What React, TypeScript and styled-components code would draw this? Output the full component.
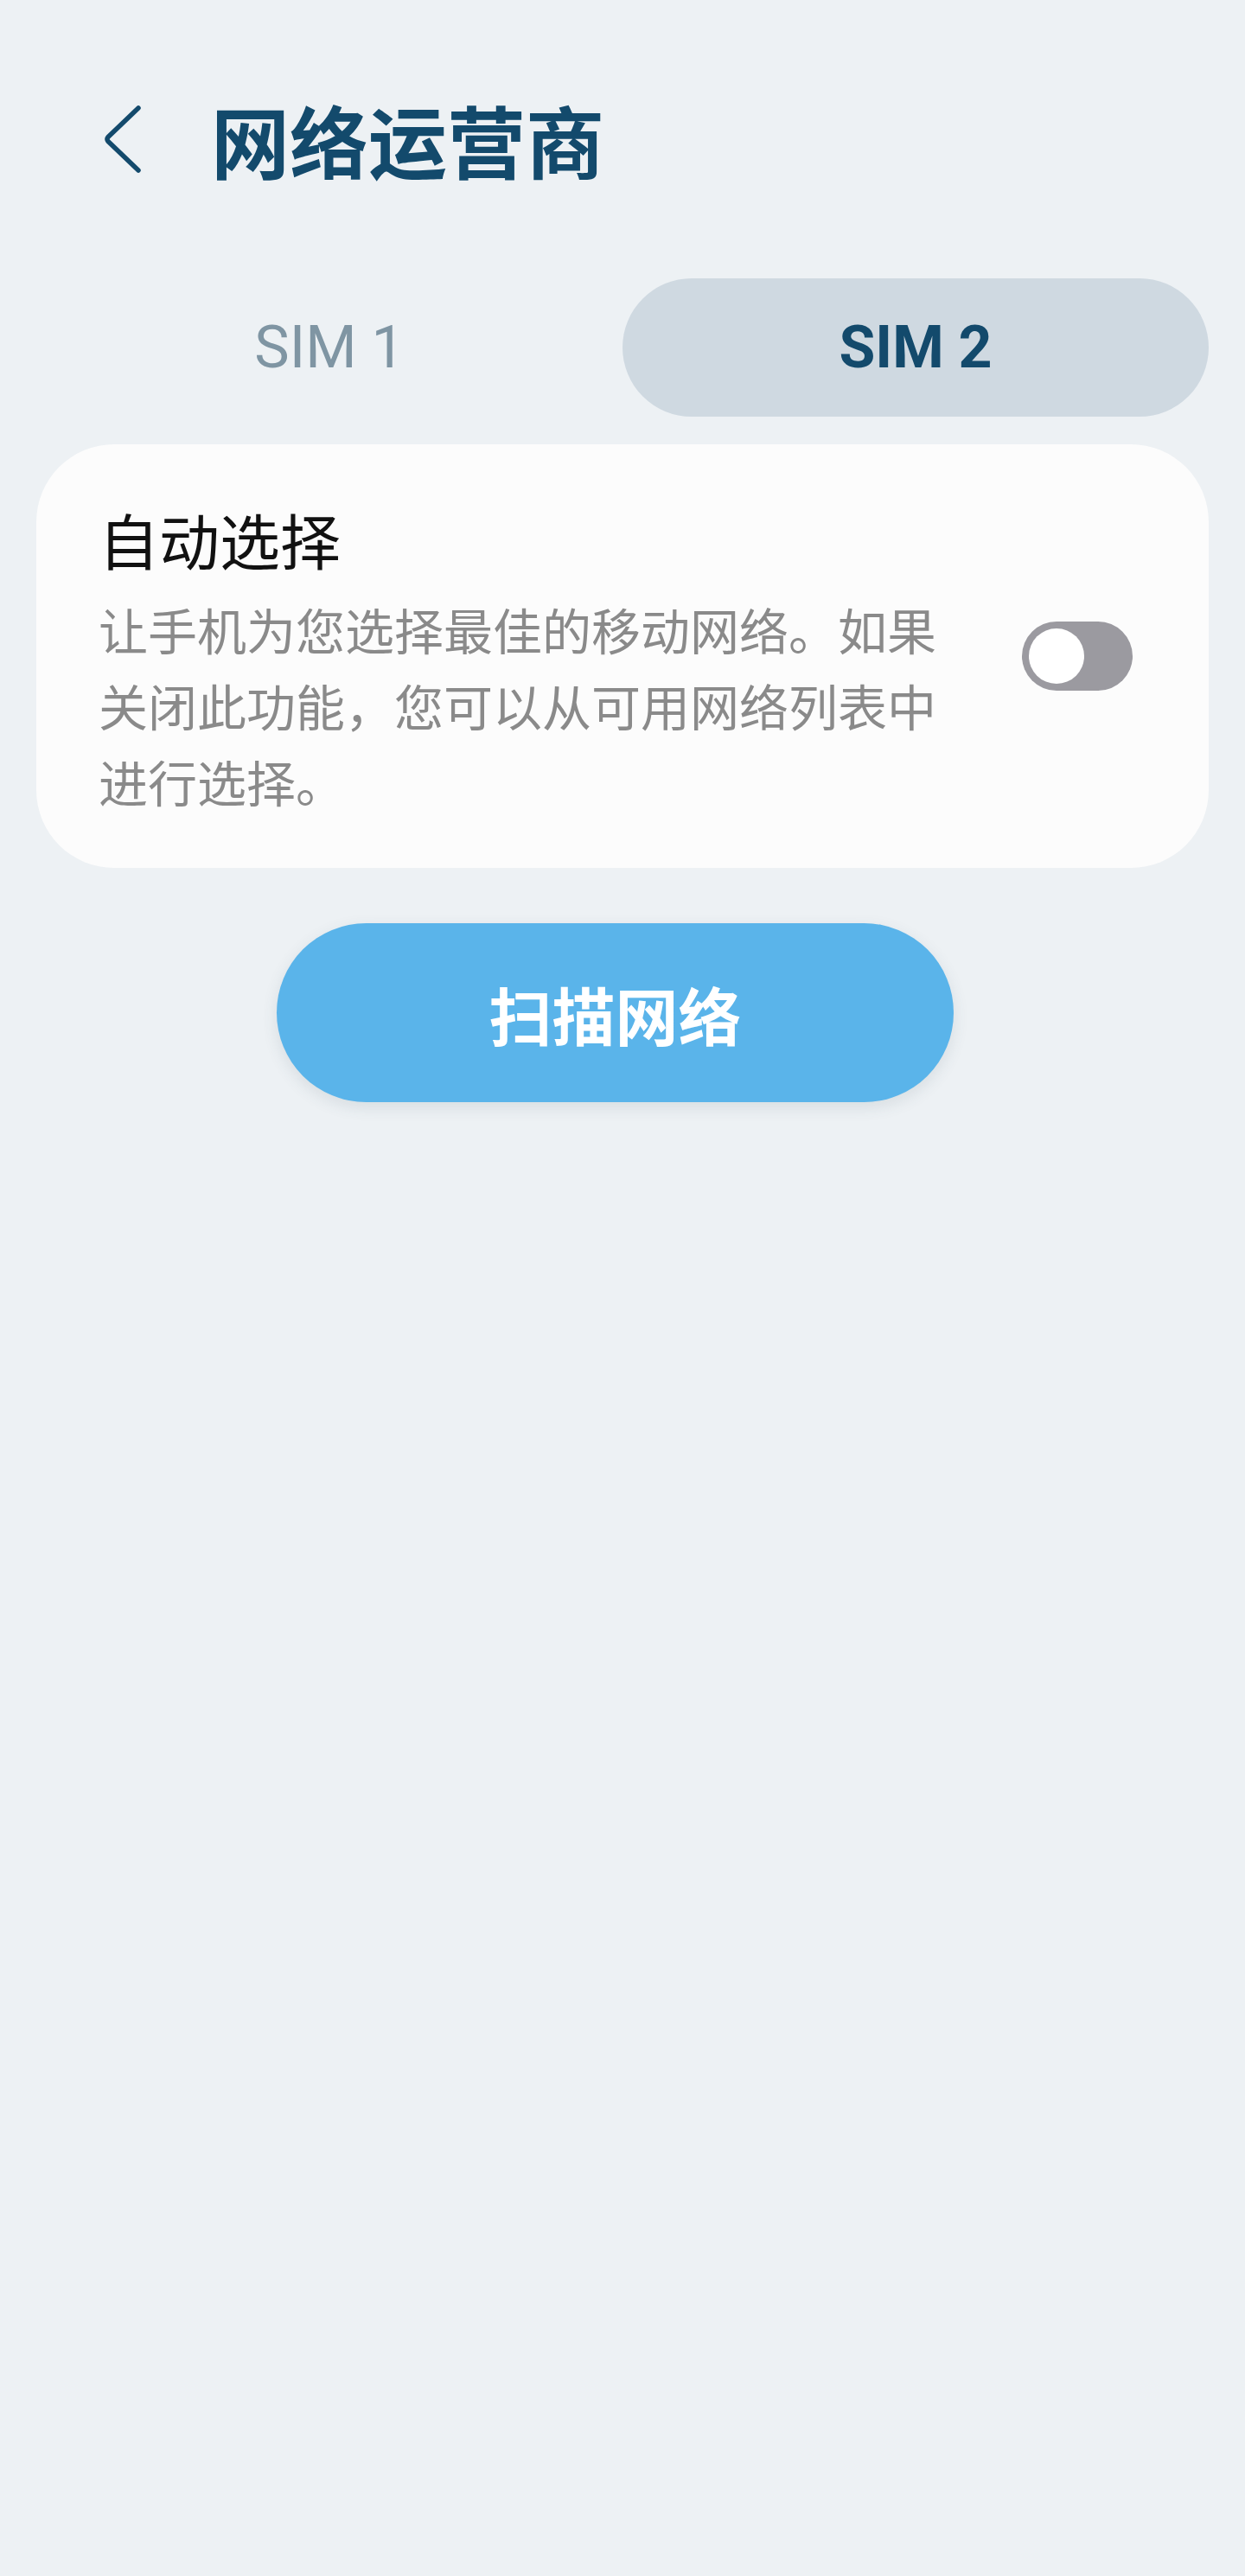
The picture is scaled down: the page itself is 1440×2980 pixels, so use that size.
import styled, { createGlobalStyle } from 'styled-components'

const GlobalStyle = createGlobalStyle`
  html, body {
    margin: 0;
    padding: 0;
    background: #edf1f4;
  }
  body {
    font-family: "Noto Sans CJK SC", Roboto, sans-serif;
  }
`

const Page = styled.div`
  width: 1440px;
  min-height: 2980px;
  box-sizing: border-box;
  padding: 0 42px;
  background: #edf1f4;
  display: flex;
  flex-direction: column;
`

const Header = styled.div`
  display: flex;
  align-items: center;
  height: 110px;
  margin-top: 110px;
  padding-left: 76px;
`

const BackButton = styled.button`
  border: none;
  background: none;
  padding: 0;
  width: 48px;
  height: 84px;
  display: flex;
  align-items: center;
  justify-content: center;
  margin-right: 78px;
  margin-top: -8px;
  cursor: pointer;
`

const Title = styled.h1`
  margin: 0 0 10px;
  font-size: 91px;
  font-weight: 700;
  line-height: 110px;
  color: #134a6c;
  letter-spacing: 0;
`

const Tabs = styled.div`
  display: grid;
  grid-template-columns: 1fr 1fr;
  height: 160px;
  margin-top: 102px;
`

const Tab = styled.div<{ $active?: boolean }>`
  display: flex;
  align-items: center;
  justify-content: center;
  border-radius: 80px;
  background: ${p => (p.$active ? '#cfd9e1' : 'transparent')};
  color: ${p => (p.$active ? '#134a6c' : '#7f95a3')};
  font-family: Roboto, "Noto Sans", sans-serif;
  font-size: 68px;
  font-weight: ${p => (p.$active ? 700 : 400)};
`

const Card = styled.div`
  margin-top: 32px;
  background: #fcfcfc;
  border-radius: 90px;
  padding: 64px 88px 57px 72px;
  display: flex;
  align-items: center;
  justify-content: space-between;
`

const TextBlock = styled.div`
  width: 1000px;
  display: flex;
  flex-direction: column;
`

const CardTitle = styled.div`
  font-size: 70px;
  line-height: 91px;
  color: #111111;
`

const CardDesc = styled.div`
  margin-top: 14px;
  font-size: 57px;
  line-height: 88px;
  color: #8a8a8a;
`

const Switch = styled.div<{ $on?: boolean }>`
  width: 128px;
  height: 80px;
  margin-bottom: 7px;
  border-radius: 40px;
  background: ${p => (p.$on ? '#3e91d0' : '#9b9aa0')};
  box-sizing: border-box;
  padding: 8px;
  display: flex;
  justify-content: ${p => (p.$on ? 'flex-end' : 'flex-start')};
  flex-shrink: 0;
`

const Knob = styled.div`
  width: 64px;
  height: 64px;
  border-radius: 50%;
  background: #ffffff;
`

const ScanButton = styled.button`
  margin-top: 64px;
  margin-left: 278px;
  width: 783px;
  height: 207px;
  border: none;
  border-radius: 104px;
  background: #5ab4ea;
  color: #ffffff;
  font-family: "Noto Sans CJK SC", sans-serif;
  font-size: 73px;
  font-weight: 700;
  box-shadow: 0 6px 18px rgba(60, 80, 100, 0.12);
  cursor: pointer;
`

const App = () => {
  return (
    <>
      <GlobalStyle />
      <Page>
        <Header>
          <BackButton aria-label="返回">
            <svg width="44" height="80" viewBox="0 0 44 80" fill="none">
              <path
                d="M40 4 L5 37.5 Q3 40 5 42.5 L40 76"
                stroke="#134a6c"
                strokeWidth="5.5"
                strokeLinecap="round"
                strokeLinejoin="round"
              />
            </svg>
          </BackButton>
          <Title>网络运营商</Title>
        </Header>
        <Tabs>
          <Tab>SIM 1</Tab>
          <Tab $active>SIM 2</Tab>
        </Tabs>
        <Card>
          <TextBlock>
            <CardTitle>自动选择</CardTitle>
            <CardDesc>让手机为您选择最佳的移动网络。如果关闭此功能，您可以从可用网络列表中进行选择。</CardDesc>
          </TextBlock>
          <Switch>
            <Knob />
          </Switch>
        </Card>
        <ScanButton>扫描网络</ScanButton>
      </Page>
    </>
  )
}

export default App
